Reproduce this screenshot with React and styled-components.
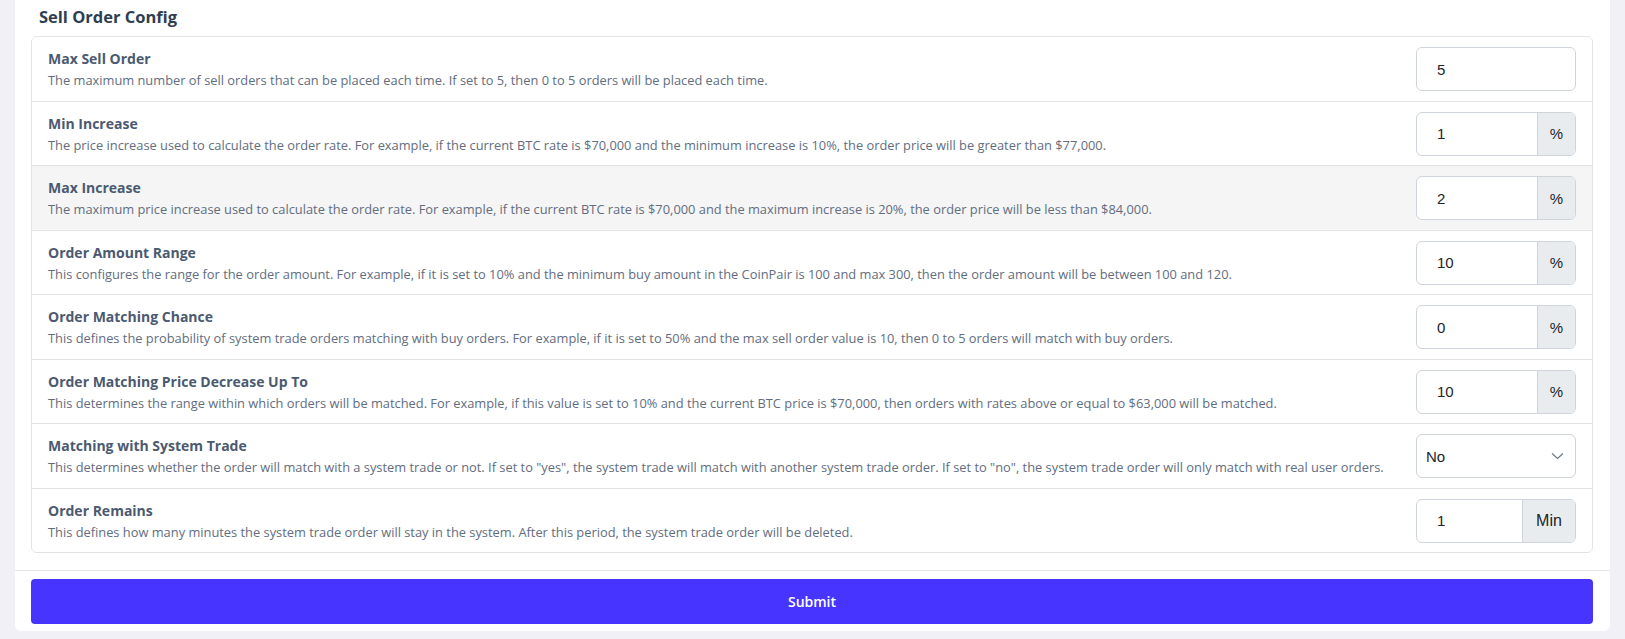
import React from 'react';
import styled, { createGlobalStyle } from 'styled-components';

const GlobalStyle = createGlobalStyle`
  body {
    margin: 0;
    background: #f0f0f6;
    font-family: "Open Sans", "DejaVu Sans", sans-serif;
  }
`;

const Page = styled.div`
  padding: 0 15px 9px;
`;

const Card = styled.div`
  background: #ffffff;
  border-radius: 0 0 6px 6px;
`;

const CardTitle = styled.h4`
  margin: 0;
  padding: 4px 24px 7px;
  font-size: 16.5px;
  line-height: 25px;
  font-weight: 700;
  color: #2f3d51;
`;

const CardBody = styled.div`
  padding: 0 17px 17px 16px;
`;

const Table = styled.div`
  border: 1px solid #e3e3e3;
  border-radius: 6px;
  overflow: hidden;
`;

const Row = styled.div`
  display: flex;
  align-items: center;
  justify-content: space-between;
  gap: 16px;
  padding: 10px 16px 9.5px 16px;
  background: ${p => (p.$active ? '#f5f5f5' : '#ffffff')};
  border-bottom: 1px solid #e3e3e3;
  &:last-child {
    border-bottom: none;
  }
`;

const Info = styled.div`
  display: flex;
  flex-direction: column;
  gap: 2px;
  min-width: 0;
`;

const Label = styled.div`
  font-size: 14px;
  line-height: 20px;
  font-weight: 700;
  color: #4b5a70;
`;

const Desc = styled.div`
  font-size: 12.85px;
  line-height: 18px;
  color: #626d80;
`;

const Group = styled.div`
  display: flex;
  flex: 0 0 160px;
  width: 160px;
  height: 44px;
  border: 1px solid #ced4da;
  border-radius: 6px;
  overflow: hidden;
  box-sizing: border-box;
  background: #ffffff;
`;

const Field = styled.input`
  flex: 1;
  min-width: 0;
  border: none;
  outline: none;
  padding: 0 0 0 20px;
  font-family: "Liberation Sans", Arial, sans-serif;
  font-size: 15px;
  color: #212529;
  background: transparent;
`;

const Addon = styled.span`
  display: flex;
  align-items: center;
  justify-content: center;
  width: ${p => p.$wide ? '52px' : '37px'};
  background: #e9ecef;
  border-left: 1px solid #ced4da;
  font-family: "Liberation Sans", Arial, sans-serif;
  font-size: ${p => p.$wide ? '16px' : '15px'};
  color: #212529;
`;

const SelectBox = styled.div`
  display: flex;
  align-items: center;
  justify-content: space-between;
  flex: 0 0 160px;
  width: 160px;
  height: 44px;
  box-sizing: border-box;
  padding: 0 11px 0 9px;
  border: 1px solid #ced4da;
  border-radius: 6px;
  font-family: "Liberation Sans", Arial, sans-serif;
  font-size: 15px;
  color: #212529;
`;

const Footer = styled.div`
  border-top: 1px solid #e6e6e6;
  padding: 8px 17px 7px 16px;
`;

const SubmitButton = styled.button`
  display: block;
  width: 100%;
  height: 45px;
  border: none;
  border-radius: 4px;
  background: #4735ff;
  color: #ffffff;
  font-family: "Open Sans", sans-serif;
  font-size: 14px;
  font-weight: 600;
`;

const rows = [
  {
    label: 'Max Sell Order',
    desc: 'The maximum number of sell orders that can be placed each time. If set to 5, then 0 to 5 orders will be placed each time.',
    value: '5',
  },
  {
    label: 'Min Increase',
    desc: 'The price increase used to calculate the order rate. For example, if the current BTC rate is $70,000 and the minimum increase is 10%, the order price will be greater than $77,000.',
    value: '1',
    unit: '%',
  },
  {
    label: 'Max Increase',
    desc: 'The maximum price increase used to calculate the order rate. For example, if the current BTC rate is $70,000 and the maximum increase is 20%, the order price will be less than $84,000.',
    value: '2',
    unit: '%',
    active: true,
  },
  {
    label: 'Order Amount Range',
    desc: 'This configures the range for the order amount. For example, if it is set to 10% and the minimum buy amount in the CoinPair is 100 and max 300, then the order amount will be between 100 and 120.',
    value: '10',
    unit: '%',
  },
  {
    label: 'Order Matching Chance',
    desc: 'This defines the probability of system trade orders matching with buy orders. For example, if it is set to 50% and the max sell order value is 10, then 0 to 5 orders will match with buy orders.',
    value: '0',
    unit: '%',
  },
  {
    label: 'Order Matching Price Decrease Up To',
    desc: 'This determines the range within which orders will be matched. For example, if this value is set to 10% and the current BTC price is $70,000, then orders with rates above or equal to $63,000 will be matched.',
    value: '10',
    unit: '%',
  },
  {
    label: 'Matching with System Trade',
    desc: 'This determines whether the order will match with a system trade or not. If set to "yes", the system trade will match with another system trade order. If set to "no", the system trade order will only match with real user orders.',
    select: 'No',
  },
  {
    label: 'Order Remains',
    desc: 'This defines how many minutes the system trade order will stay in the system. After this period, the system trade order will be deleted.',
    value: '1',
    unit: 'Min',
  },
];

const Chevron = () => (
  <svg width="13" height="8" viewBox="0 0 13 8" fill="none">
    <path d="M1 1.5l5.5 5 5.5-5" stroke="#6c757d" strokeWidth="1.1" />
  </svg>
);

const App = () => (
  <Page>
    <GlobalStyle />
    <Card>
      <CardTitle>Sell Order Config</CardTitle>
      <CardBody>
        <Table>
          {rows.map(r => (
            <Row key={r.label} $active={r.active}>
              <Info>
                <Label>{r.label}</Label>
                <Desc>{r.desc}</Desc>
              </Info>
              {r.select ? (
                <SelectBox>
                  {r.select}
                  <Chevron />
                </SelectBox>
              ) : (
                <Group>
                  <Field defaultValue={r.value} />
                  {r.unit && <Addon $wide={r.unit === 'Min'}>{r.unit}</Addon>}
                </Group>
              )}
            </Row>
          ))}
        </Table>
      </CardBody>
      <Footer>
        <SubmitButton>Submit</SubmitButton>
      </Footer>
    </Card>
  </Page>
);

export default App;
